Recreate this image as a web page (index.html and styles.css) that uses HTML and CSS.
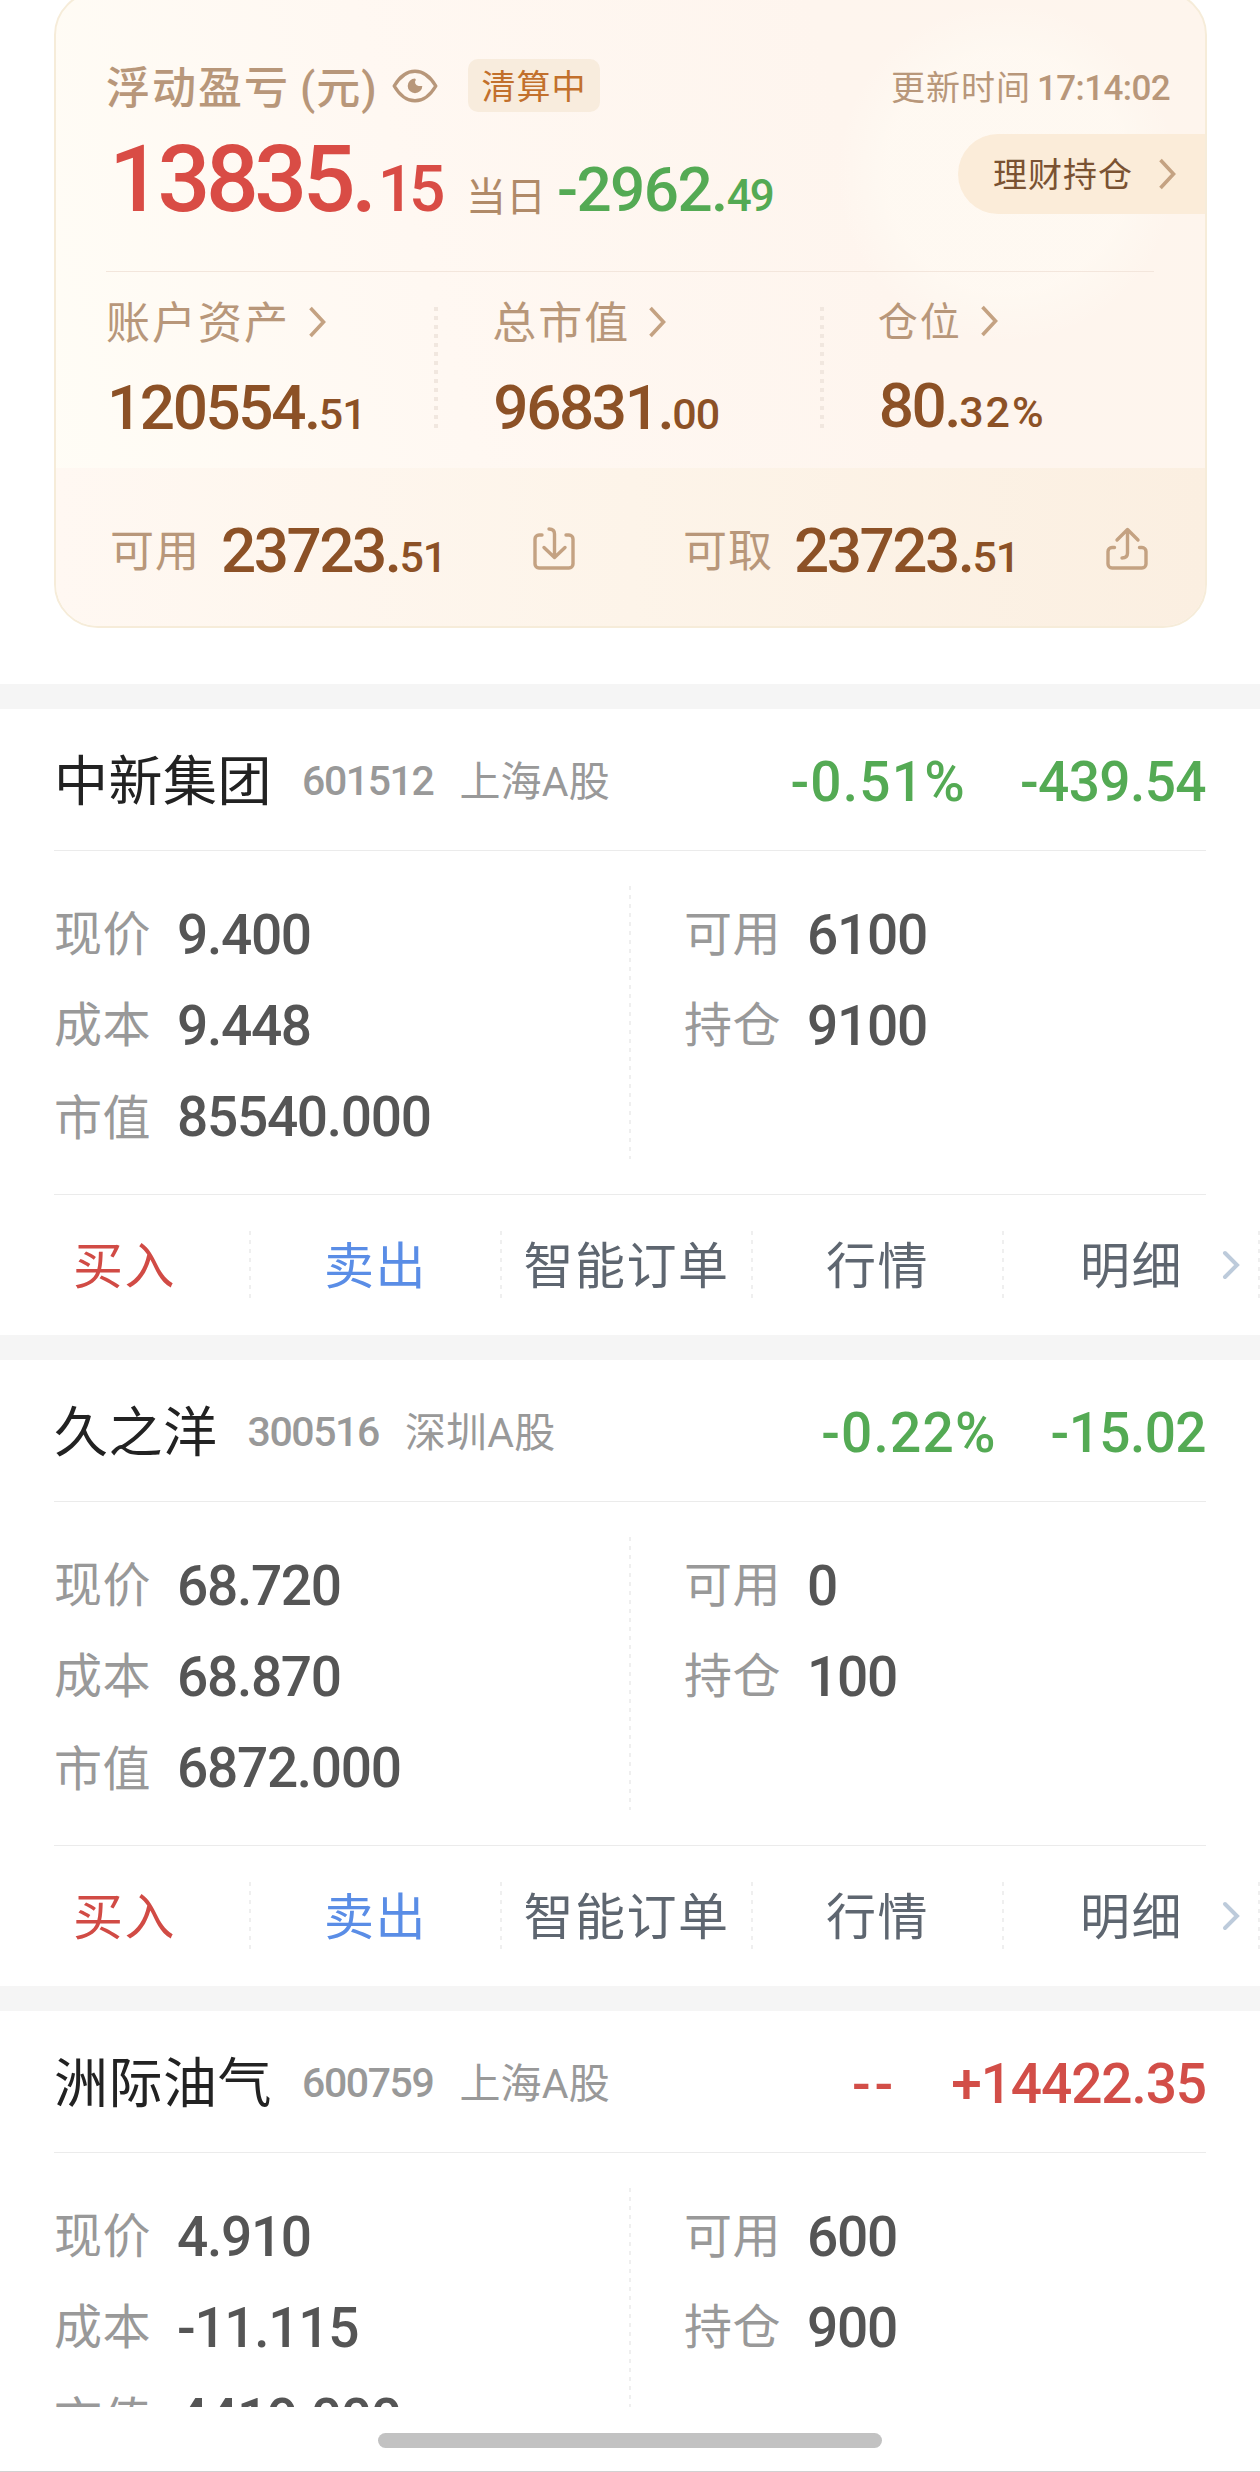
FILE: index.html
```html
<!DOCTYPE html>
<html lang="zh-CN">
<head>
    <meta charset="UTF-8" />
    <meta name="viewport" content="width=device-width, initial-scale=1.0" />
    <title>持仓</title>
    <link rel="stylesheet" href="styles.css">
</head>
<body>
<div class="page">
    <div class="asset-wrap">
        <div class="asset">
            <div class="asset-top">
                <div class="profit">
                    <div class="profit-title">
                        <span class="title-text">浮动盈亏</span><span class="title-unit">(元)</span>
                        <svg class="eye" width="46" height="34" viewBox="0 0 46 34" fill="none">
                            <path d="M2.2 17C7.5 8 14 2.2 23 2.2S38.500 8 43.800 17C38.500 26 32 31.800 23 31.800S7.500 26 2.200 17Z" stroke="#b8977a" stroke-width="3.400" stroke-linejoin="round" />
                            <path d="M23 9.600a7.300 7.300 0 1 0 7.300 7.300h-3.500a3.700 3.700 0 0 1-2.900-6.100Z" fill="#b8977a" />
                        </svg>
                        <span class="badge">清算中</span>
                    </div>
                    <div class="profit-value">
                        <span class="total num">13835.<span class="total-dec">15</span></span>
                        <span class="today-label">当日</span>
                        <span class="today num">-2962.<span class="today-dec">49</span></span>
                    </div>
                </div>
                <div class="side">
                    <div class="update">更新时间<span class="update-time">17:14:02</span></div>
                    <div class="finance">
                        <span>理财持仓</span>
                        <svg class="arrow" width="19" height="32" viewBox="0 0 19 32"><path d="M2.500 2 15.500 16 2.500 30" /></svg>
                    </div>
                </div>
            </div>
            <div class="asset-line"></div>
            <div class="stats">
                <div class="stat first">
                    <div class="stat-label"><span>账户资产</span><svg class="arrow" width="19" height="32" viewBox="0 0 19 32"><path d="M2.500 2 15.500 16 2.500 30" /></svg></div>
                    <div class="stat-value num">120554.<span class="dec">51</span></div>
                </div>
                <div class="stat-dots"></div>
                <div class="stat">
                    <div class="stat-label"><span>总市值</span><svg class="arrow" width="19" height="32" viewBox="0 0 19 32"><path d="M2.500 2 15.500 16 2.500 30" /></svg></div>
                    <div class="stat-value num">96831.<span class="dec">00</span></div>
                </div>
                <div class="stat-dots"></div>
                <div class="stat position">
                    <div class="stat-label"><span>仓位</span><svg class="arrow" width="19" height="32" viewBox="0 0 19 32"><path d="M2.500 2 15.500 16 2.500 30" /></svg></div>
                    <div class="stat-value num">80.<span class="dec">32%</span></div>
                </div>
            </div>
            <div class="cash">
                <div class="cash-item">
                    <span class="cash-label">可用</span>
                    <span class="cash-value num">23723.<span class="dec">51</span></span>
                    <svg class="cash-icon" width="44" height="44" viewBox="0 0 44 44">
                        <path d="M10 9H7a4 4 0 0 0-4 4v25a4 4 0 0 0 4 4h30a4 4 0 0 0 4-4V13a4 4 0 0 0-4-4h-3" />
                        <path d="M17 3c4 0 5.500 2 5.500 5v23M12 21.500l10.500 10 10.500-10" />
                    </svg>
                </div>
                <div class="cash-item">
                    <span class="cash-label">可取</span>
                    <span class="cash-value num">23723.<span class="dec">51</span></span>
                    <svg class="cash-icon" width="44" height="44" viewBox="0 0 44 44">
                        <path d="M9.500 21.500H7a4 4 0 0 0-4 4V38a4 4 0 0 0 4 4h30a4 4 0 0 0 4-4V25.500a4 4 0 0 0-4-4h-2.500" />
                        <path d="M17 32c4 0 5.500-2 5.500-5V4M12 14 22.500 3.500 33 14" />
                    </svg>
                </div>
            </div>
        </div>
    </div>

    <div class="stock">
        <div class="stock-head">
            <span class="name">中新集团</span>
            <span class="code">601512</span>
            <span class="market">上海A股</span>
            <span class="rate num down">-0.51%</span>
            <span class="gain num down">-439.54</span>
        </div>
        <div class="stock-body">
            <div class="col">
                <div class="row"><span class="label">现价</span><span class="value num">9.400</span></div>
                <div class="row"><span class="label">成本</span><span class="value num">9.448</span></div>
                <div class="row"><span class="label">市值</span><span class="value num">85540.000</span></div>
            </div>
            <div class="dots"></div>
            <div class="col right">
                <div class="row"><span class="label">可用</span><span class="value num">6100</span></div>
                <div class="row"><span class="label">持仓</span><span class="value num">9100</span></div>
            </div>
        </div>
        <div class="actions">
            <div class="action buy">买入</div>
            <div class="action sell">卖出</div>
            <div class="action">智能订单</div>
            <div class="action">行情</div>
            <div class="action last">明细<svg class="more" width="19" height="30" viewBox="0 0 19 30"><path d="M3 3 15 15 3 27" /></svg></div>
        </div>
    </div>

    <div class="stock">
        <div class="stock-head">
            <span class="name">久之洋</span>
            <span class="code">300516</span>
            <span class="market">深圳A股</span>
            <span class="rate num down">-0.22%</span>
            <span class="gain num down">-15.02</span>
        </div>
        <div class="stock-body">
            <div class="col">
                <div class="row"><span class="label">现价</span><span class="value num">68.720</span></div>
                <div class="row"><span class="label">成本</span><span class="value num">68.870</span></div>
                <div class="row"><span class="label">市值</span><span class="value num">6872.000</span></div>
            </div>
            <div class="dots"></div>
            <div class="col right">
                <div class="row"><span class="label">可用</span><span class="value num">0</span></div>
                <div class="row"><span class="label">持仓</span><span class="value num">100</span></div>
            </div>
        </div>
        <div class="actions">
            <div class="action buy">买入</div>
            <div class="action sell">卖出</div>
            <div class="action">智能订单</div>
            <div class="action">行情</div>
            <div class="action last">明细<svg class="more" width="19" height="30" viewBox="0 0 19 30"><path d="M3 3 15 15 3 27" /></svg></div>
        </div>
    </div>

    <div class="stock cut">
        <div class="stock-head">
            <span class="name">洲际油气</span>
            <span class="code">600759</span>
            <span class="market">上海A股</span>
            <span class="rate num up dash">--</span>
            <span class="gain num up">+14422.35</span>
        </div>
        <div class="stock-body">
            <div class="col">
                <div class="row"><span class="label">现价</span><span class="value num">4.910</span></div>
                <div class="row"><span class="label">成本</span><span class="value num">-11.115</span></div>
                <div class="row"><span class="label">市值</span><span class="value num">4419.000</span></div>
            </div>
            <div class="dots"></div>
            <div class="col right">
                <div class="row"><span class="label">可用</span><span class="value num">600</span></div>
                <div class="row"><span class="label">持仓</span><span class="value num">900</span></div>
            </div>
        </div>
    </div>

    <div class="home">
        <div class="home-bar"></div>
    </div>
</div>
</body>
</html>
```

FILE: styles.css
```css
* {
    box-sizing: border-box;
}
body {
    margin: 0;
    background: #fff;
    color: #222;
    font-family: Roboto, "Noto Sans CJK SC", sans-serif;
    line-height: 1.2;
}
.page {
    display: flex;
    flex-direction: column;
    width: 1260px;
    height: 2472px;
    overflow: hidden;
    border-bottom: 1px solid #d2d2d2;
}
.num {
    font-weight: 500;
    white-space: nowrap;
}

/* asset card */
.asset-wrap {
    display: flow-root;
    height: 684px;
    flex: none;
}
.asset {
    width: 1153px;
    height: 637px;
    margin: -9px 0 0 54px;
    border: 2px solid #f6ecd9;
    border-radius: 44px;
    overflow: hidden;
    background:
        radial-gradient(circle 170px at 950px 180px, rgba(255, 251, 244, 0.6) 70%, transparent),
        linear-gradient(75deg, #fffdf6 0%, #fff8f2 35%, #fef5ee 70%, #fef5ed 100%);
}
.asset-top {
    display: flex;
    justify-content: space-between;
    height: 278px;
    padding: 66px 0 0 50px;
}
.profit-title {
    display: flex;
    align-items: center;
    height: 53px;
    color: #b8977a;
    font-size: 44px;
    line-height: 53px;
    font-weight: 500;
    letter-spacing: 2px;
}
.title-text,
.title-unit {
    padding-top: 7px;
}
.title-unit {
    width: 79px;
    margin-left: 10px;
    letter-spacing: 1px;
}
.eye {
    margin: 0 0 0 13px;
}
.badge {
    width: 132px;
    height: 53px;
    margin-left: 30px;
    padding-top: 2px;
    border-radius: 10px;
    background: #f8ecdd;
    color: #c2702c;
    font-size: 34px;
    font-weight: 400;
    letter-spacing: 1px;
    text-align: center;
}
.profit-value {
    display: flex;
    align-items: baseline;
    height: 66px;
    margin-top: 35px;
    line-height: 66px;
}
.total {
    width: 360px;
    padding-left: 3px;
    color: #d94c45;
    font-size: 93px;
    letter-spacing: -4.4px;
}
.total-dec {
    margin-left: 5px;
    font-size: 64px;
    line-height: 0;
    letter-spacing: -5px;
}
.today-label {
    width: 91px;
    color: #b08a68;
    font-size: 40px;
}
.today {
    color: #54aa54;
    font-size: 62px;
    letter-spacing: -1.6px;
}
.today-dec {
    font-size: 44px;
    line-height: 0;
    letter-spacing: -2px;
}
.side {
    display: flex;
    flex-direction: column;
    align-items: flex-end;
}
.update {
    height: 53px;
    padding: 3px 35px 0 0;
    color: #b8977a;
    font-size: 34px;
    line-height: 53px;
    letter-spacing: 1px;
}
.update-time {
    margin-left: 6px;
    font-size: 35px;
    font-weight: 500;
    letter-spacing: -0.6px;
}
.finance {
    display: flex;
    align-items: center;
    width: 247px;
    height: 80px;
    margin-top: 22px;
    padding-left: 35px;
    border-radius: 40px 0 0 40px;
    background: #fbecd9;
    color: #7a5232;
    font-size: 34px;
    letter-spacing: 1px;
}
.finance span {
    padding-top: 3px;
}
.finance .arrow {
    margin-left: 25px;
}
.arrow path {
    fill: none;
    stroke: #c4a282;
    stroke-width: 3.6;
}
.asset-line {
    height: 1px;
    margin: 0 51px 0 50px;
    background: #f3e6dc;
}
.stats {
    display: flex;
    height: 196px;
    padding-top: 29px;
}
.stat {
    width: 382px;
    padding-left: 54px;
}
.stat.first {
    width: 379px;
    padding-left: 50px;
}
.stat-label {
    display: flex;
    align-items: center;
    height: 42px;
    color: #b8977a;
    font-size: 44px;
    line-height: 42px;
    letter-spacing: 2px;
}
.stat-label span {
    padding-top: 4px;
}
.stat-label .arrow {
    margin-left: 18px;
}
.stat-value {
    height: 46px;
    margin-top: 42px;
    padding-left: 1px;
    color: #8c5126;
    font-size: 62px;
    line-height: 46px;
    letter-spacing: -2.4px;
}
.dec {
    font-size: 43px;
    line-height: 0;
    letter-spacing: -1px;
}
.position .stat-label {
    font-size: 40px;
    height: 40px;
}
.position .dec {
    letter-spacing: 2px;
}
.stat-dots {
    width: 4px;
    height: 122px;
    margin-top: 6px;
    background: repeating-linear-gradient(#f1e7df 0 4px, transparent 4px 9px);
}
.cash {
    display: flex;
    height: 158px;
    background: linear-gradient(90deg, #fff8f2 0%, #fdf4e9 50%, #fbefe1 100%);
}
.cash-item {
    display: flex;
    align-items: center;
    width: 573px;
    padding: 6px 53px 0 54px;
    line-height: 46px;
}
.cash-label {
    width: 111px;
    padding-top: 3px;
    color: #b8977a;
    font-size: 44px;
    letter-spacing: 1px;
}
.cash-value {
    padding-top: 2px;
    color: #8c5126;
    font-size: 62px;
    letter-spacing: -2.5px;
}
.cash-icon {
    margin: -4px 0 0 auto;
}
.cash-icon path {
    fill: none;
    stroke: #c4a282;
    stroke-width: 3.4;
    stroke-linecap: round;
    stroke-linejoin: round;
}

/* holdings */
.stock {
    flex: none;
    height: 651px;
    border-top: 25px solid #f5f5f5;
}
/* last one runs under the home bar */
.stock.cut {
    height: 421px;
    overflow: hidden;
}
.stock-head {
    display: flex;
    align-items: center;
    height: 142px;
    margin: 0 54px;
    padding-top: 4px;
    border-bottom: 1px solid #ebebeb;
}
.name {
    padding-top: 4px;
    font-size: 54px;
    letter-spacing: 0.5px;
}
.code {
    margin-left: 30px;
    color: #999;
    font-size: 41px;
    font-weight: 500;
    letter-spacing: -1.4px;
}
.market {
    margin-left: 26px;
    padding-top: 3px;
    color: #999;
    font-size: 41px;
    letter-spacing: 0.2px;
}
.rate {
    margin-left: auto;
    font-size: 55px;
    letter-spacing: 1.2px;
}
.dash {
    letter-spacing: 4px;
}
.gain {
    margin-left: 54px;
    font-size: 55px;
    letter-spacing: -0.6px;
}
.down {
    color: #54aa54;
}
.up {
    color: #d24e48;
}
.up.gain {
    letter-spacing: -1.1px;
}
.stock-body {
    display: flex;
    height: 343px;
    margin: 0 54px;
    padding: 35px 0;
}
.col {
    width: 575px;
    padding-top: 3px;
}
.col.right {
    padding-left: 53px;
}
.dots {
    width: 2px;
    background: repeating-linear-gradient(#efefef 0 4px, transparent 4px 9px);
}
.row {
    display: flex;
    align-items: center;
    height: 91px;
}
.label {
    width: 123px;
    color: #999;
    font-size: 48px;
    letter-spacing: 0.5px;
}
.row:nth-child(3) .label {
    padding-top: 4px;
}
.value {
    color: #555;
    font-size: 55px;
    letter-spacing: -1.3px;
}
.actions {
    display: flex;
    align-items: center;
    height: 141px;
    background: linear-gradient(#ebebeb, #ebebeb) 54px 0 / 1152px 1px no-repeat;
}
.action {
    display: flex;
    justify-content: center;
    align-items: center;
    width: 251px;
    height: 68px;
    padding: 4px 2px 0 0;
    color: #5e6670;
    font-size: 50px;
    letter-spacing: 1.5px;
    background: repeating-linear-gradient(#efefef 0 4px, transparent 4px 9px) right / 2px 68px no-repeat;
}
.action.last {
    width: 256px;
    padding-left: 76px;
    justify-content: flex-start;
}
.buy {
    color: #d14b45;
}
.sell {
    color: #5a8de6;
}
.more {
    margin: -4px 0 0 39px;
}
.more path {
    fill: none;
    stroke: #bdcbdb;
    stroke-width: 4;
    stroke-linecap: round;
}

.home {
    display: flex;
    justify-content: center;
    padding-top: 26px;
}
.home-bar {
    width: 504px;
    height: 15px;
    border-radius: 8px;
    background: #c2c2c2;
}
```
